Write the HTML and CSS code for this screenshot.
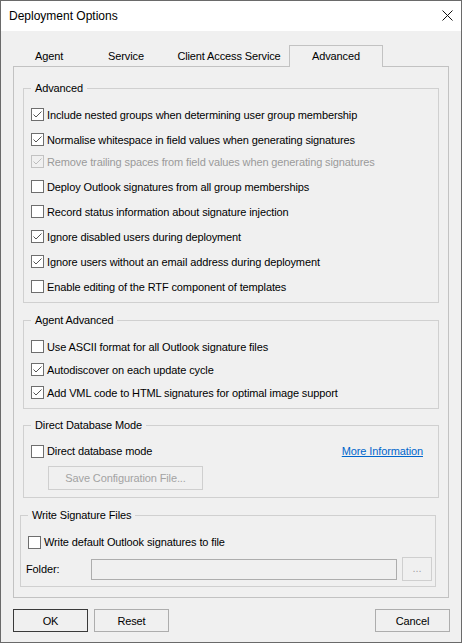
FILE: index.html
```html
<!DOCTYPE html>
<html>
<head>
<meta charset="utf-8">
<title>Deployment Options</title>
<link rel="stylesheet" href="styles.css">
</head>
<body>
<div class="window">
  <div class="titlebar">
    <span class="title">Deployment Options</span>
    <svg class="close" width="11" height="11" viewBox="0 0 11 11"><path d="M0.5 0.5L10.5 10.5M10.5 0.5L0.5 10.5" stroke="#111" stroke-width="1" fill="none"/></svg>
  </div>
  <div class="client">
    <div class="tabs">
      <div class="tab t-agent">Agent</div>
      <div class="tab t-service">Service</div>
      <div class="tab t-client">Client Access Service</div>
      <div class="tab t-adv selected">Advanced</div>
    </div>
    <div class="panel">
      <fieldset class="group g-adv">
        <legend>Advanced</legend>
        <div class="rows rows-adv">
          <div class="cb-row"><span class="cb"><svg width="11" height="11" viewBox="0 0 11 11"><polyline points="1.5,5.5 4,8 9.5,2.5"/></svg></span>Include nested groups when determining user group membership</div>
          <div class="cb-row"><span class="cb"><svg width="11" height="11" viewBox="0 0 11 11"><polyline points="1.5,5.5 4,8 9.5,2.5"/></svg></span>Normalise whitespace in field values when generating signatures</div>
          <div class="cb-row tight disabled"><span class="cb"><svg width="11" height="11" viewBox="0 0 11 11"><polyline points="1.5,5.5 4,8 9.5,2.5"/></svg></span>Remove trailing spaces from field values when generating signatures</div>
          <div class="cb-row"><span class="cb"></span>Deploy Outlook signatures from all group memberships</div>
          <div class="cb-row"><span class="cb"></span>Record status information about signature injection</div>
          <div class="cb-row"><span class="cb"><svg width="11" height="11" viewBox="0 0 11 11"><polyline points="1.5,5.5 4,8 9.5,2.5"/></svg></span>Ignore disabled users during deployment</div>
          <div class="cb-row"><span class="cb"><svg width="11" height="11" viewBox="0 0 11 11"><polyline points="1.5,5.5 4,8 9.5,2.5"/></svg></span>Ignore users without an email address during deployment</div>
          <div class="cb-row"><span class="cb"></span>Enable editing of the RTF component of templates</div>
        </div>
      </fieldset>

      <fieldset class="group g-agent">
        <legend>Agent Advanced</legend>
        <div class="rows rows-agent">
          <div class="cb-row"><span class="cb"></span>Use ASCII format for all Outlook signature files</div>
          <div class="cb-row"><span class="cb"><svg width="11" height="11" viewBox="0 0 11 11"><polyline points="1.5,5.5 4,8 9.5,2.5"/></svg></span>Autodiscover on each update cycle</div>
          <div class="cb-row"><span class="cb"><svg width="11" height="11" viewBox="0 0 11 11"><polyline points="1.5,5.5 4,8 9.5,2.5"/></svg></span>Add VML code to HTML signatures for optimal image support</div>
        </div>
      </fieldset>

      <fieldset class="group g-db">
        <legend>Direct Database Mode</legend>
        <div class="rows rows-db">
          <div class="cb-row db-row">
            <span class="cb-label"><span class="cb"></span>Direct database mode</span>
            <a class="link" href="#">More Information</a>
          </div>
          <div class="btn disabled save-btn">Save Configuration File...</div>
        </div>
      </fieldset>

      <fieldset class="group g-write">
        <legend>Write Signature Files</legend>
        <div class="rows rows-write">
          <div class="cb-row"><span class="cb"></span>Write default Outlook signatures to file</div>
          <div class="folder-row">
            <span class="folder-label">Folder:</span>
            <span class="textbox"></span>
            <span class="btn disabled browse-btn">...</span>
          </div>
        </div>
      </fieldset>
    </div>

    <div class="buttons">
      <div class="btn dialog-btn default">OK</div>
      <div class="btn dialog-btn">Reset</div>
      <div class="btn dialog-btn cancel">Cancel</div>
    </div>
  </div>
</div>
</body>
</html>
```

FILE: styles.css
```css
* { box-sizing: border-box; }

html, body {
  margin: 0;
  padding: 0;
  background: #f0f0f0;
}

body {
  font-family: "Liberation Sans", Arial, sans-serif;
  font-size: 11px;
  letter-spacing: -0.12px;
  color: #000;
}

.window {
  width: 462px;
  height: 643px;
  border: 1px solid #6a6a6a;
  background: #f0f0f0;
  display: flex;
  flex-direction: column;
}

.titlebar {
  height: 30px;
  background: #fff;
  display: flex;
  align-items: center;
  justify-content: space-between;
  padding: 0 8px 0 8px;
}

.title {
  font-size: 12px;
  letter-spacing: 0;
  color: #000;
}

.close {
  display: block;
  margin-top: -1px;
}

.client {
  padding: 14px 11px 0 12px;
}

.tabs {
  display: flex;
  align-items: flex-end;
  height: 21px;
  padding-left: 2px;
}

.tab {
  height: 21px;
  line-height: 22px;
  text-align: center;
  color: #000;
}

.t-agent { width: 68px; }
.t-service { width: 86px; }
.t-client { width: 120px; }
.t-adv { width: 94px; }

.tab.selected {
  height: 22px;
  line-height: 21px;
  border: 1px solid #c2c2c2;
  border-bottom: none;
  background: #f0f0f0;
  margin-bottom: -1px;
  position: relative;
  z-index: 1;
}

.panel {
  width: 436px;
  height: 532px;
  border: 1px solid #c2c2c2;
  display: flex;
  flex-direction: column;
}

.group {
  border: 1px solid #d0d0d0;
  margin: 0;
  padding: 0;
  min-width: 0;
}

.group legend {
  padding: 0 4px;
  margin-left: 7px;
  height: 14px;
  line-height: 14px;
  color: #000;
}

.g-adv { margin: 14px 9px 0 9px; }
.g-agent { margin: 10px 9px 0 9px; }
.g-db { margin: 9px 9px 0 9px; }
.g-write { margin: 10px 12px 0 6px; }

.rows { padding-left: 7px; }
.rows-adv { padding-top: 7px; padding-bottom: 3px; }
.rows-agent { padding-top: 8px; padding-bottom: 4px; }
.rows-db { padding-top: 9px; padding-bottom: 7px; padding-right: 14px; }
.rows-write { padding-top: 10px; padding-bottom: 5px; padding-right: 3px; }

.cb-row {
  display: flex;
  align-items: center;
  height: 25px;
  white-space: nowrap;
}

.rows-agent .cb-row { height: 23px; }
.rows-db .cb-row, .rows-write .cb-row { height: 20px; }

.cb-row.tight { margin-top: -3px; }

.cb-row.disabled { color: #9a9a9a; }

.cb {
  width: 13px;
  height: 13px;
  border: 1px solid #6e6e6e;
  background: #fff;
  margin-right: 3px;
  flex: none;
  display: block;
}

.cb svg {
  display: block;
}

.cb polyline {
  fill: none;
  stroke: #555;
  stroke-width: 1;
}

.disabled .cb {
  border-color: #c2c2c2;
  background: #f0f0f0;
}

.disabled .cb polyline {
  stroke: #bcbcbc;
}

.db-row {
  justify-content: space-between;
}

.cb-label {
  display: flex;
  align-items: center;
}

.link {
  color: #0066cc;
  text-decoration: underline;
  margin-left: -3px;
  margin-right: 1px;
}

.btn {
  display: flex;
  align-items: center;
  justify-content: center;
  border: 1px solid #adadad;
  background: #f0f0f0;
  color: #000;
}

.btn.disabled {
  border-color: #cfcfcf;
  color: #a3a3a3;
}

.save-btn {
  width: 155px;
  height: 24px;
  margin: 5px 0 0 17px;
}

.folder-row {
  display: flex;
  align-items: center;
  height: 24px;
  margin-top: 5px;
  margin-left: -2px;
}

.folder-label {
  width: 65px;
  flex: none;
}

.textbox {
  width: 306px;
  height: 21px;
  border: 1px solid #adadad;
  background: #f0f0f0;
  flex: none;
}

.browse-btn {
  width: 30px;
  height: 24px;
  margin-left: 5px;
  flex: none;
  padding-bottom: 2px;
  color: #b0b0b0;
}

.buttons {
  display: flex;
  margin-top: 11px;
  gap: 6px;
}

.dialog-btn {
  width: 75px;
  height: 23px;
}

.dialog-btn.default {
  border-color: #3a3a3a;
}

.dialog-btn.cancel {
  margin-left: auto;
}
```
